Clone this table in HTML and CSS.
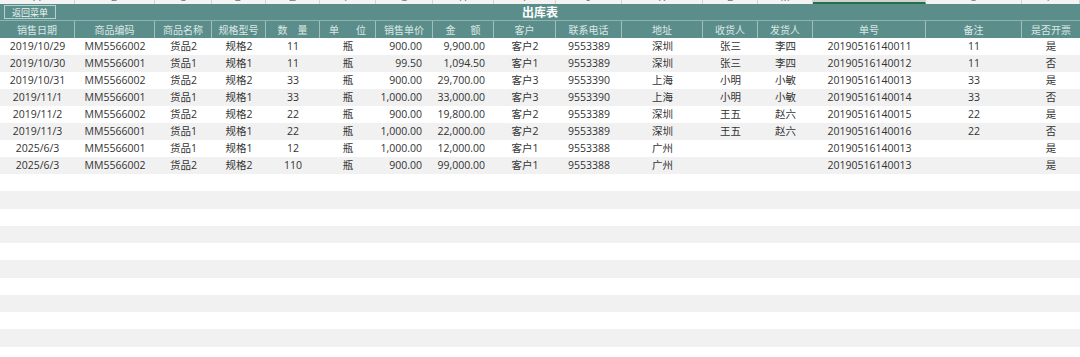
FILE: index.html
```html
<!DOCTYPE html>
<html lang="zh">
<head>
<meta charset="utf-8">
<title>出库表</title>
<link rel="stylesheet" href="styles.css">
</head>
<body>
<div class="sheet">
  <div class="colhead cols">
    <div class="ch">A</div><div class="ch">B</div><div class="ch">C</div><div class="ch">D</div>
    <div class="ch">E</div><div class="ch">F</div><div class="ch">G</div><div class="ch">H</div>
    <div class="ch">I</div><div class="ch">J</div><div class="ch">K</div><div class="ch">L</div>
    <div class="ch">M</div><div class="ch sel">N</div><div class="ch">O</div><div class="ch">P</div>
  </div>
  <div class="title-row">
    <div class="title-left"><span class="back">返回菜单</span></div>
    <div class="title">出库表</div>
    <div></div>
  </div>
  <div class="hdr cols">
    <div>销售日期</div><div>商品编码</div><div>商品名称</div><div>规格型号</div>
    <div class="sp sp10"><span>数</span><span>量</span></div>
    <div class="sp sp17"><span>单</span><span>位</span></div>
    <div>销售单价</div>
    <div class="sp sp15"><span>金</span><span>额</span></div>
    <div>客户</div><div>联系电话</div><div>地址</div><div>收货人</div><div>发货人</div>
    <div>单号</div><div>备注</div><div>是否开票</div>
  </div>

  <div class="row cols">
    <div>2019/10/29</div><div>MM5566002</div><div>货品2</div><div>规格2</div><div>11</div><div>瓶</div>
    <div class="price">900.00</div><div class="amt">9,900.00</div><div>客户2</div><div>9553389</div>
    <div>深圳</div><div>张三</div><div>李四</div><div>20190516140011</div><div>11</div><div>是</div>
  </div>
  <div class="row cols">
    <div>2019/10/30</div><div>MM5566001</div><div>货品1</div><div>规格1</div><div>11</div><div>瓶</div>
    <div class="price">99.50</div><div class="amt">1,094.50</div><div>客户1</div><div>9553389</div>
    <div>深圳</div><div>张三</div><div>李四</div><div>20190516140012</div><div>11</div><div>否</div>
  </div>
  <div class="row cols">
    <div>2019/10/31</div><div>MM5566002</div><div>货品2</div><div>规格2</div><div>33</div><div>瓶</div>
    <div class="price">900.00</div><div class="amt">29,700.00</div><div>客户3</div><div>9553390</div>
    <div>上海</div><div>小明</div><div>小敏</div><div>20190516140013</div><div>33</div><div>是</div>
  </div>
  <div class="row cols">
    <div>2019/11/1</div><div>MM5566001</div><div>货品1</div><div>规格1</div><div>33</div><div>瓶</div>
    <div class="price">1,000.00</div><div class="amt">33,000.00</div><div>客户3</div><div>9553390</div>
    <div>上海</div><div>小明</div><div>小敏</div><div>20190516140014</div><div>33</div><div>否</div>
  </div>
  <div class="row cols">
    <div>2019/11/2</div><div>MM5566002</div><div>货品2</div><div>规格2</div><div>22</div><div>瓶</div>
    <div class="price">900.00</div><div class="amt">19,800.00</div><div>客户2</div><div>9553389</div>
    <div>深圳</div><div>王五</div><div>赵六</div><div>20190516140015</div><div>22</div><div>是</div>
  </div>
  <div class="row cols">
    <div>2019/11/3</div><div>MM5566001</div><div>货品1</div><div>规格1</div><div>22</div><div>瓶</div>
    <div class="price">1,000.00</div><div class="amt">22,000.00</div><div>客户2</div><div>9553389</div>
    <div>深圳</div><div>王五</div><div>赵六</div><div>20190516140016</div><div>22</div><div>否</div>
  </div>
  <div class="row cols">
    <div>2025/6/3</div><div>MM5566001</div><div>货品1</div><div>规格1</div><div>12</div><div>瓶</div>
    <div class="price">1,000.00</div><div class="amt">12,000.00</div><div>客户1</div><div>9553388</div>
    <div>广州</div><div></div><div></div><div>20190516140013</div><div></div><div>是</div>
  </div>
  <div class="row cols">
    <div>2025/6/3</div><div>MM5566002</div><div>货品2</div><div>规格2</div><div>110</div><div>瓶</div>
    <div class="price">900.00</div><div class="amt">99,000.00</div><div>客户1</div><div>9553388</div>
    <div>广州</div><div></div><div></div><div>20190516140013</div><div></div><div>是</div>
  </div>

  <div class="empty"></div><div class="empty"></div><div class="empty"></div><div class="empty"></div>
  <div class="empty"></div><div class="empty"></div><div class="empty"></div><div class="empty"></div>
  <div class="empty"></div><div class="empty"></div><div class="empty"></div>
</div>
</body>
</html>
```

FILE: styles.css
```css
* { box-sizing: border-box; }
html, body { margin: 0; padding: 0; background: #ffffff; }
body {
  width: 1080px;
  height: 357px;
  overflow: hidden;
  font-family: "Open Sans", "Noto Sans CJK SC", sans-serif;
  font-size: 10.5px;
  color: #333333;
}
.sheet { display: flex; flex-direction: column; }

.cols {
  display: grid;
  grid-template-columns: 75px 80px 57px 54px 54px 56px 57px 61px 62px 66px 81px 55px 55px 113px 96px 58px;
}

/* excel column letters strip, mostly cut off */
.colhead {
  height: 4px;
  overflow: hidden;
  background: #f3f3f3;
}
.ch {
  height: 4px;
  border-right: 1px solid #d4d4d4;
  display: flex;
  justify-content: center;
  align-items: flex-end;
  font-family: "Liberation Sans", sans-serif;
  font-size: 11px;
  line-height: 11px;
  color: #777;
  padding-bottom: 1px;
}
.ch.sel {
  background: #d2d2d2;
  border-bottom: 2px solid #217346;
  padding-bottom: 0;
}

.title-row {
  height: 17px;
  background: #5b8e8a;
  display: grid;
  grid-template-columns: 1fr auto 1fr;
  align-items: center;
  border-bottom: 1px solid #8fb3b0;
}
.title-left { display: flex; padding-left: 4px; }
.back {
  display: flex;
  align-items: center;
  height: 14px;
  width: 52px;
  justify-content: center;
  border: 1px solid #b7d0cd;
  color: #eef5f4;
  font-family: "Noto Sans CJK SC", sans-serif;
  font-size: 9px;
  line-height: 1;
}
.title {
  color: #ffffff;
  font-family: "Noto Sans CJK SC", sans-serif;
  font-weight: bold;
  font-size: 12px;
  line-height: 1;
}

.hdr {
  height: 17px;
  background: #5b8e8a;
}
.hdr > div {
  display: flex;
  align-items: center;
  justify-content: center;
  color: #dbe8e6;
  font-family: "Noto Sans CJK SC", sans-serif;
  font-size: 10px;
  border-right: 1px solid #9fc0bd;
  line-height: 1;
}
.hdr > div:last-child { border-right: none; }
.sp10 { gap: 10px; }
.sp17 { gap: 17px; }
.sp15 { gap: 15px; }

.row { height: 17px; }
.row > div {
  display: flex;
  align-items: center;
  justify-content: center;
  line-height: 1;
  white-space: nowrap;
}
.row > .price { justify-content: flex-end; padding-right: 11px; }
.row > .amt { justify-content: flex-end; padding-right: 9px; }

.row:nth-child(odd) { background: #f1f1f1; }
.row:nth-child(even) { background: #ffffff; }

.empty { height: 17.25px; flex: none; }
.empty:nth-child(even) { background: #ffffff; }
.empty:nth-child(odd) { background: #f1f1f1; }
```
